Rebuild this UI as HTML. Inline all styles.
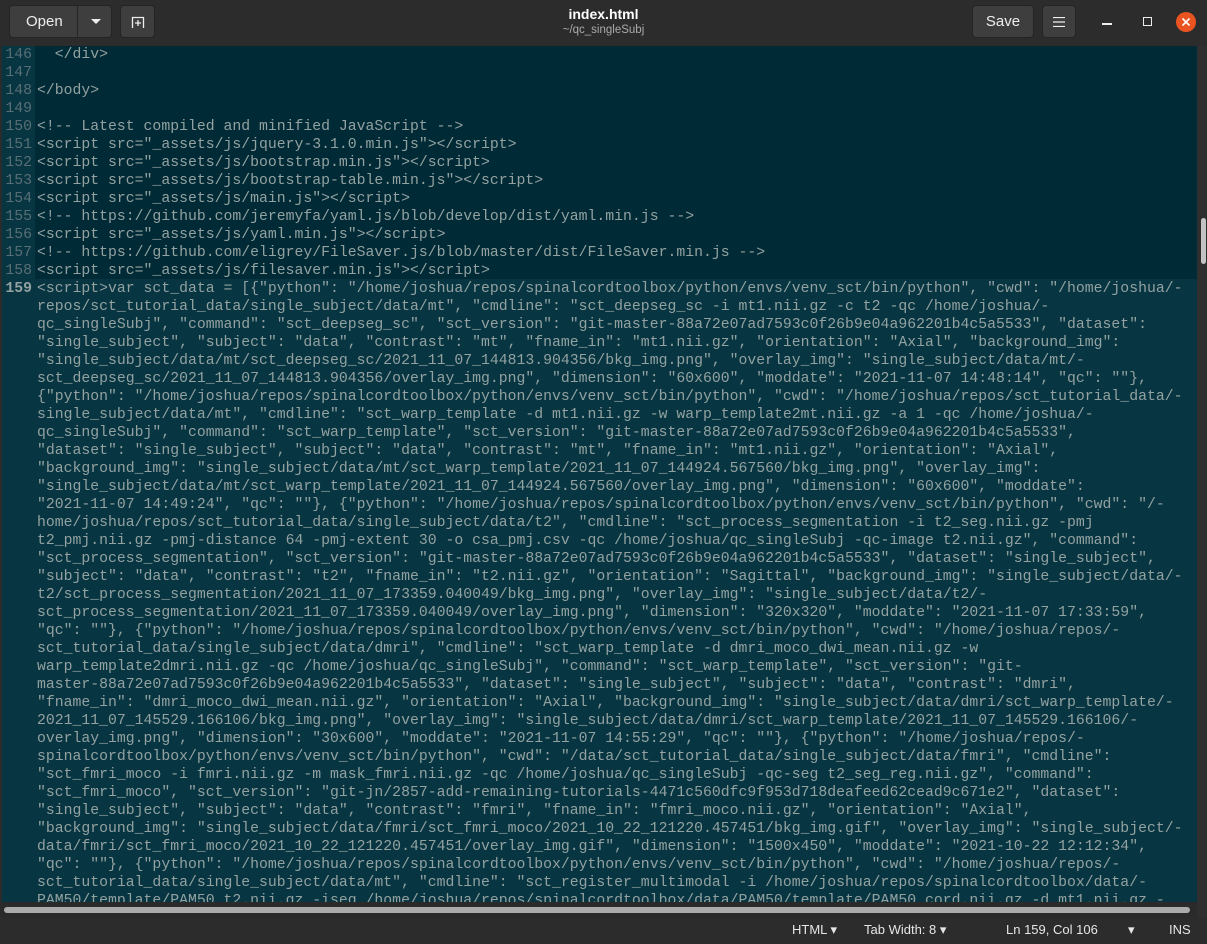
<!DOCTYPE html>
<html><head><meta charset="utf-8">
<style>
*{margin:0;padding:0;box-sizing:border-box}
html,body{width:1207px;height:944px;overflow:hidden;background:#2c2c2c;font-family:"Liberation Sans",sans-serif}
.hdr{position:absolute;left:0;top:0;width:1207px;height:46px;background:#2c2c2c}
.btn{position:absolute;top:5px;height:33px;background:#3e3e3e;border-radius:4px;border:1px solid #242424;color:#eee;font-size:15px;line-height:31px;text-align:center}
.title{position:absolute;left:0;width:1207px;text-align:center;color:#fff}
.ed{position:absolute;left:2px;top:46px;width:1195px;height:856px;background:#002b36;overflow:hidden}
.gut{position:absolute;left:0;top:0;width:33px;height:856px;background:#073642}
.hl{position:absolute;left:0;top:233px;width:1195px;height:623px;background:#073642}
pre{position:absolute;top:0;font-family:"Liberation Mono",monospace;font-size:14.8px;line-height:18px;color:#93a1a1;white-space:pre}
.ln{left:0;width:30px;text-align:right;color:#586e75}
.code{left:35px}
.vs{position:absolute;left:1197px;top:46px;width:10px;height:871px;background:#2f2f2f}
.hs{position:absolute;left:0;top:902px;width:1197px;height:15px;background:#2a2a2a}
.sb{position:absolute;left:0;top:917px;width:1207px;height:27px;background:#2c2c2c;color:#e6e6e6;font-size:13px}
.sb span{position:absolute;top:5px}
</style></head><body>
<div class="hdr">
 <div class="btn" style="left:9px;width:103px;text-align:left;padding-left:16px">Open</div>
 <div style="position:absolute;left:77px;top:6px;width:1px;height:31px;background:#262626"></div>
 <div style="position:absolute;left:91px;top:19px;width:0;height:0;border-left:5px solid transparent;border-right:5px solid transparent;border-top:5px solid #eee"></div>
 <div class="btn" style="left:120px;width:35px"><svg width="14" height="12" viewBox="0 0 14 12" style="margin-top:10px"><path d="M1.5 12V1.5h11V12M7 4v6M4 7h6" stroke="#eee" stroke-width="1.3" fill="none"/></svg></div>
 <div class="title" style="top:6px;font-size:14px;font-weight:bold">index.html</div>
 <div class="title" style="top:24px;font-size:11.5px;color:#aaa">~/qc_singleSubj</div>
 <div class="btn" style="left:972px;width:62px">Save</div>
 <div class="btn" style="left:1042px;width:34px"><svg width="12" height="10" viewBox="0 0 12 10" style="margin-top:11px"><path d="M0 .5h12M0 5h12M0 9.5h12" stroke="#eee" stroke-width="1.2"/></svg></div>
 <div style="position:absolute;left:1102px;top:23px;width:10px;height:2px;background:#eee"></div>
 <div style="position:absolute;left:1143px;top:17px;width:9px;height:9px;border:1.5px solid #eee"></div>
 <div style="position:absolute;left:1176px;top:12px;width:20px;height:20px;border-radius:50%;background:#e95420"><svg width="20" height="20" viewBox="0 0 20 20"><path d="M6.5 6.5l7 7M13.5 6.5l-7 7" stroke="#fff" stroke-width="1.6"/></svg></div>
</div>
<div class="ed">
 <div class="gut"></div>
 <div class="hl"></div>
<pre class="ln">146
147
148
149
150
151
152
153
154
155
156
157
158
<b style="color:#93a1a1">159</b></pre>
<pre class="code">  &lt;/div&gt;

&lt;/body&gt;

&lt;!-- Latest compiled and minified JavaScript --&gt;
&lt;script src="_assets/js/jquery-3.1.0.min.js"&gt;&lt;/script&gt;
&lt;script src="_assets/js/bootstrap.min.js"&gt;&lt;/script&gt;
&lt;script src="_assets/js/bootstrap-table.min.js"&gt;&lt;/script&gt;
&lt;script src="_assets/js/main.js"&gt;&lt;/script&gt;
&lt;!-- https://github.com/jeremyfa/yaml.js/blob/develop/dist/yaml.min.js --&gt;
&lt;script src="_assets/js/yaml.min.js"&gt;&lt;/script&gt;
&lt;!-- https://github.com/eligrey/FileSaver.js/blob/master/dist/FileSaver.min.js --&gt;
&lt;script src="_assets/js/filesaver.min.js"&gt;&lt;/script&gt;
&lt;script&gt;var sct_data = [{"python": "/home/joshua/repos/spinalcordtoolbox/python/envs/venv_sct/bin/python", "cwd": "/home/joshua/-
repos/sct_tutorial_data/single_subject/data/mt", "cmdline": "sct_deepseg_sc -i mt1.nii.gz -c t2 -qc /home/joshua/-
qc_singleSubj", "command": "sct_deepseg_sc", "sct_version": "git-master-88a72e07ad7593c0f26b9e04a962201b4c5a5533", "dataset":
"single_subject", "subject": "data", "contrast": "mt", "fname_in": "mt1.nii.gz", "orientation": "Axial", "background_img":
"single_subject/data/mt/sct_deepseg_sc/2021_11_07_144813.904356/bkg_img.png", "overlay_img": "single_subject/data/mt/-
sct_deepseg_sc/2021_11_07_144813.904356/overlay_img.png", "dimension": "60x600", "moddate": "2021-11-07 14:48:14", "qc": ""},
{"python": "/home/joshua/repos/spinalcordtoolbox/python/envs/venv_sct/bin/python", "cwd": "/home/joshua/repos/sct_tutorial_data/-
single_subject/data/mt", "cmdline": "sct_warp_template -d mt1.nii.gz -w warp_template2mt.nii.gz -a 1 -qc /home/joshua/-
qc_singleSubj", "command": "sct_warp_template", "sct_version": "git-master-88a72e07ad7593c0f26b9e04a962201b4c5a5533",
"dataset": "single_subject", "subject": "data", "contrast": "mt", "fname_in": "mt1.nii.gz", "orientation": "Axial",
"background_img": "single_subject/data/mt/sct_warp_template/2021_11_07_144924.567560/bkg_img.png", "overlay_img":
"single_subject/data/mt/sct_warp_template/2021_11_07_144924.567560/overlay_img.png", "dimension": "60x600", "moddate":
"2021-11-07 14:49:24", "qc": ""}, {"python": "/home/joshua/repos/spinalcordtoolbox/python/envs/venv_sct/bin/python", "cwd": "/-
home/joshua/repos/sct_tutorial_data/single_subject/data/t2", "cmdline": "sct_process_segmentation -i t2_seg.nii.gz -pmj
t2_pmj.nii.gz -pmj-distance 64 -pmj-extent 30 -o csa_pmj.csv -qc /home/joshua/qc_singleSubj -qc-image t2.nii.gz", "command":
"sct_process_segmentation", "sct_version": "git-master-88a72e07ad7593c0f26b9e04a962201b4c5a5533", "dataset": "single_subject",
"subject": "data", "contrast": "t2", "fname_in": "t2.nii.gz", "orientation": "Sagittal", "background_img": "single_subject/data/-
t2/sct_process_segmentation/2021_11_07_173359.040049/bkg_img.png", "overlay_img": "single_subject/data/t2/-
sct_process_segmentation/2021_11_07_173359.040049/overlay_img.png", "dimension": "320x320", "moddate": "2021-11-07 17:33:59",
"qc": ""}, {"python": "/home/joshua/repos/spinalcordtoolbox/python/envs/venv_sct/bin/python", "cwd": "/home/joshua/repos/-
sct_tutorial_data/single_subject/data/dmri", "cmdline": "sct_warp_template -d dmri_moco_dwi_mean.nii.gz -w
warp_template2dmri.nii.gz -qc /home/joshua/qc_singleSubj", "command": "sct_warp_template", "sct_version": "git-
master-88a72e07ad7593c0f26b9e04a962201b4c5a5533", "dataset": "single_subject", "subject": "data", "contrast": "dmri",
"fname_in": "dmri_moco_dwi_mean.nii.gz", "orientation": "Axial", "background_img": "single_subject/data/dmri/sct_warp_template/-
2021_11_07_145529.166106/bkg_img.png", "overlay_img": "single_subject/data/dmri/sct_warp_template/2021_11_07_145529.166106/-
overlay_img.png", "dimension": "30x600", "moddate": "2021-11-07 14:55:29", "qc": ""}, {"python": "/home/joshua/repos/-
spinalcordtoolbox/python/envs/venv_sct/bin/python", "cwd": "/data/sct_tutorial_data/single_subject/data/fmri", "cmdline":
"sct_fmri_moco -i fmri.nii.gz -m mask_fmri.nii.gz -qc /home/joshua/qc_singleSubj -qc-seg t2_seg_reg.nii.gz", "command":
"sct_fmri_moco", "sct_version": "git-jn/2857-add-remaining-tutorials-4471c560dfc9f953d718deafeed62cead9c671e2", "dataset":
"single_subject", "subject": "data", "contrast": "fmri", "fname_in": "fmri_moco.nii.gz", "orientation": "Axial",
"background_img": "single_subject/data/fmri/sct_fmri_moco/2021_10_22_121220.457451/bkg_img.gif", "overlay_img": "single_subject/-
data/fmri/sct_fmri_moco/2021_10_22_121220.457451/overlay_img.gif", "dimension": "1500x450", "moddate": "2021-10-22 12:12:34",
"qc": ""}, {"python": "/home/joshua/repos/spinalcordtoolbox/python/envs/venv_sct/bin/python", "cwd": "/home/joshua/repos/-
sct_tutorial_data/single_subject/data/mt", "cmdline": "sct_register_multimodal -i /home/joshua/repos/spinalcordtoolbox/data/-
PAM50/template/PAM50_t2.nii.gz -iseg /home/joshua/repos/spinalcordtoolbox/data/PAM50/template/PAM50_cord.nii.gz -d mt1.nii.gz -</pre>
</div>
<div class="vs"><div style="position:absolute;left:4px;top:172px;width:5px;height:46px;border-radius:3px;background:#c4c4c4"></div></div>
<div class="hs"><div style="position:absolute;left:4px;top:5px;width:1186px;height:6px;border-radius:3px;background:#ababab"></div></div>
<div class="sb">
 <span style="left:792px">HTML ▾</span>
 <span style="left:864px">Tab Width: 8 ▾</span>
 <span style="left:1006px">Ln 159, Col 106</span>
 <span style="left:1128px">▾</span>
 <span style="left:1169px">INS</span>
</div>
</body></html>
